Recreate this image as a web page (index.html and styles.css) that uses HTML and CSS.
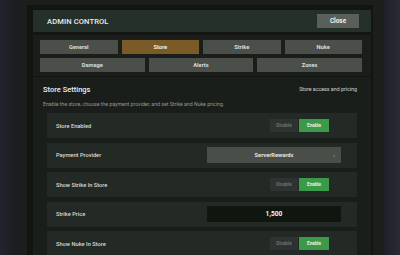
FILE: index.html
```html
<!DOCTYPE html>
<html>
	<head>
		<meta charset="utf-8">
		<title>Admin Control</title>
		<link rel="stylesheet" href="styles.css">
	</head>
	<body>
		<div class="backdrop">
			<div class="panel">
				<div class="header">
					<div class="title">ADMIN CONTROL</div>
					<div class="close">Close</div>
				</div>
				<div class="tabs">
					<div class="tab-row four">
						<div class="tab">General</div>
						<div class="tab active">Store</div>
						<div class="tab">Strike</div>
						<div class="tab">Nuke</div>
					</div>
					<div class="tab-row three">
						<div class="tab">Damage</div>
						<div class="tab">Alerts</div>
						<div class="tab">Zones</div>
					</div>
				</div>
				<div class="section">
					<div class="section-head">
						<div class="section-title">Store Settings</div>
						<div class="section-hint">Store access and pricing</div>
					</div>
					<div class="section-desc">Enable the store, choose the payment provider, and set Strike and Nuke pricing.</div>
					<div class="rows">
						<div class="row">
							<div class="label">Store Enabled</div>
							<div class="toggle">
								<div class="off">Disable</div>
								<div class="on">Enable</div>
							</div>
						</div>
						<div class="row">
							<div class="label">Payment Provider</div>
							<div class="select">ServerRewards<span class="chev">›</span></div>
						</div>
						<div class="row">
							<div class="label">Show Strike In Store</div>
							<div class="toggle">
								<div class="off">Disable</div>
								<div class="on">Enable</div>
							</div>
						</div>
						<div class="row">
							<div class="label">Strike Price</div>
							<div class="price">1,500</div>
						</div>
						<div class="row">
							<div class="label">Show Nuke In Store</div>
							<div class="toggle">
								<div class="off">Disable</div>
								<div class="on">Enable</div>
							</div>
						</div>
					</div>
				</div>
			</div>
		</div>
	</body>
</html>
```

FILE: styles.css
```css
*{
	box-sizing: border-box;
}
html, body{
	margin: 0;
	height: 100%;
	overflow: hidden;
}
body{
	background: linear-gradient(90deg, #23242e 0%, #1b1c21 4%, #1b1c21 94%, #282a34 100%);
	font-family: Roboto, "Liberation Sans", sans-serif;
	color: #dcdedc;
}
.backdrop{
	margin-left: 17px;
	width: 367px;
	height: 100%;
	padding: 5px 11px 0 10px;
	background: #1c1e1c;
}
.panel{
	height: 100%;
	display: flex;
	flex-direction: column;
	padding: 5px 2px 0 6px;
	background: #131513;
}
.header{
	flex: none;
	height: 22px;
	display: flex;
	align-items: center;
	justify-content: space-between;
	padding: 0 12px 0 14px;
	background: #26302a;
}
.title{
	font-size: 7.6px;
	font-weight: 500;
	letter-spacing: 0.1px;
	color: #e8ebe8;
}
.close{
	width: 42px;
	height: 14px;
	line-height: 14px;
	text-align: center;
	font-size: 6.4px;
	font-weight: 700;
	color: #eef0ee;
	background: #5a5f5a;
}
.tabs{
	flex: none;
	margin-top: 3px;
	padding: 5px 9px 4px 7px;
	background: #1a1d1a;
	display: flex;
	flex-direction: column;
	gap: 4px;
}
.tab-row{
	display: grid;
	gap: 4px;
}
.tab-row.four{
	grid-template-columns: repeat(4, 1fr);
}
.tab-row.three{
	grid-template-columns: repeat(3, 1fr);
}
.tab{
	height: 14px;
	line-height: 14px;
	text-align: center;
	font-size: 5.7px;
	font-weight: 700;
	color: #dadcda;
	background: #4a4f4a;
}
.tab.active{
	background: #7a5a26;
	color: #f2ede4;
}
.section{
	flex: 1;
	overflow: hidden;
	margin-top: 1px;
	padding: 6px 14px 0 10px;
	background: #1a1e1b;
}
.section-head{
	display: flex;
	justify-content: space-between;
	align-items: center;
	height: 12px;
}
.section-title{
	font-size: 7.5px;
	font-weight: 500;
	color: #eceeec;
}
.section-hint{
	font-size: 5.3px;
	color: #d2d5d2;
}
.section-desc{
	margin-top: 5px;
	height: 8px;
	line-height: 8px;
	font-size: 5.2px;
	color: #939893;
}
.rows{
	margin: 5px 0 0 4px;
	display: flex;
	flex-direction: column;
	gap: 4.5px;
}
.row{
	flex: none;
	height: 25px;
	display: flex;
	align-items: center;
	justify-content: space-between;
	padding: 0 16px 0 9px;
	background: #232924;
}
.label{
	font-size: 5.7px;
	font-weight: 500;
	color: #d8dbd8;
}
.toggle{
	display: flex;
	gap: 1px;
	margin-right: 12px;
}
.toggle div{
	height: 13px;
	line-height: 13px;
	text-align: center;
	font-size: 4.6px;
	font-weight: 700;
}
.off{
	width: 28px;
	background: #2e3331;
	color: #6d716e;
}
.on{
	width: 30px;
	background: #3b9a4a;
	color: #e4f3e4;
}
.select{
	position: relative;
	width: 134px;
	height: 16px;
	line-height: 16px;
	text-align: center;
	font-size: 5.7px;
	font-weight: 700;
	color: #e2e4e2;
	background: #4a4e48;
}
.chev{
	position: absolute;
	right: 6px;
	top: 0;
	font-size: 6px;
	color: #9a9e9a;
}
.price{
	width: 134px;
	height: 16px;
	line-height: 16px;
	text-align: center;
	font-size: 6.6px;
	font-weight: 700;
	color: #f4f6f4;
	background: #0f150f;
}
```
